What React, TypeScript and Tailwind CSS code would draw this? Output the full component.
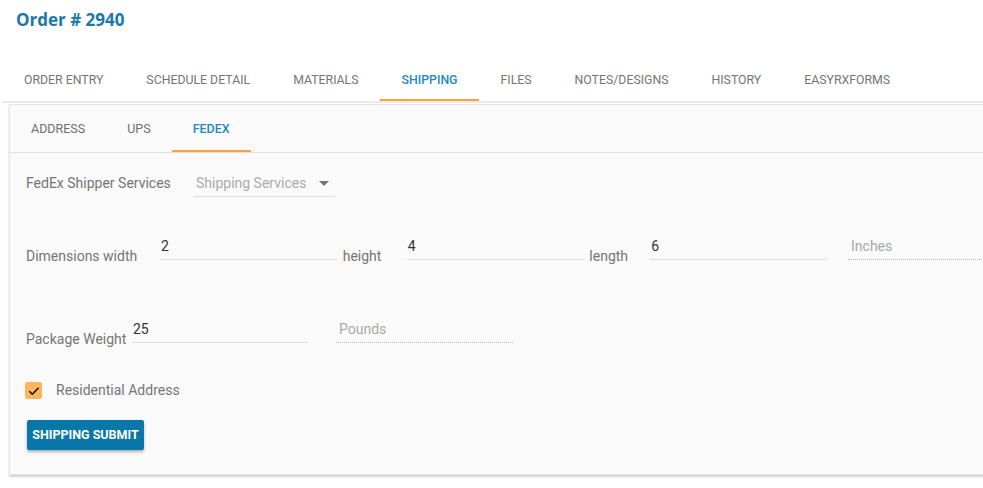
import { useState } from "react";

const mainTabs = ["Order Entry", "Schedule Detail", "Materials", "Shipping", "Files", "Notes/Designs", "History", "EasyRxForms"];
const shipTabs = ["Address", "UPS", "FedEx"];

function TextInput({ value, width }: { value: string; width: string }) {
  return (
    <div className={`${width} h-[28px] border-b border-[#dcdcdc] pl-[1px] pt-[4px] text-[14px] leading-[20px] text-[#333]`}>
      {value}
    </div>
  );
}

function UnitField({ unit, width }: { unit: string; width: string }) {
  return (
    <div className={`${width} h-[28px] border-b border-dotted border-[#b5b5b5] pl-[3px] pt-[4px] text-[14px] leading-[20px] text-[#a8a8a8]`}>
      {unit}
    </div>
  );
}

function Label({ text, width }: { text: string; width: string }) {
  return <div className={`${width} shrink-0 pt-[16px] text-[14px] leading-[16px] text-[#757575]`}>{text}</div>;
}

export default function App() {
  const [residential, setResidential] = useState(true);

  return (
    <div className="h-[488px] w-[983px] overflow-hidden bg-white" style={{ fontFamily: "Roboto, 'Liberation Sans', sans-serif" }}>
      <div className="h-[58px] pl-[16px] pt-[8px]">
        <h1 className="text-[17px] font-bold leading-[24px] text-[#1a78ad]" style={{ fontFamily: "'Open Sans', 'Liberation Sans', sans-serif" }}>
          Order # 2940
        </h1>
      </div>

      <nav className="ml-[2px] flex h-[45px] border-b-2 border-[#ebebeb]">
        {mainTabs.map((tab) => {
          const active = tab === "Shipping";
          return (
            <div
              key={tab}
              className={`-ml-px flex h-[43px] items-center border-b-2 px-[22px] pt-[3px] text-[12.3px] uppercase first:ml-0 ${
                active ? "border-[#f7a23b] font-medium text-[#2489c2]" : "border-transparent text-[#757575]"
              }`}
            >
              {tab}
            </div>
          );
        })}
      </nav>

      <section className="ml-[9px] mt-[1px] w-[990px] border border-[#e4e4e4] bg-[#fafafa] shadow-[0_2px_2px_rgba(0,0,0,0.18)]">
        <div className="flex h-[48px] border-b border-[#e0e0e0]">
          {shipTabs.map((tab) => {
            const active = tab === "FedEx";
            return (
              <div
                key={tab}
                className={`flex h-[47px] items-center border-b-2 px-[21px] pt-[4px] text-[12.5px] uppercase ${
                  active ? "border-[#f7a23b] font-medium text-[#2489c2]" : "border-transparent text-[#6f6f6f]"
                }`}
              >
                {tab}
              </div>
            );
          })}
        </div>

        <div className="pb-[24px] pl-[16px] pt-[17px]">
          <div className="flex h-[27px] items-center">
            <div className="w-[168px] text-[14px] text-[#757575]">FedEx Shipper Services</div>
            <div className="flex h-[27px] w-[141px] items-center justify-between border-b border-[#dcdcdc] pl-[2px] pr-[6px] text-[14px] text-[#ababab]">
              <span>Shipping Services</span>
              <svg width="10" height="5" viewBox="0 0 10 5">
                <path d="M0 0h10L5 5z" fill="#757575" />
              </svg>
            </div>
          </div>

          <div className="mt-[35px] flex h-[36px] items-start">
            <Label text="Dimensions width" width="w-[134px]" />
            <TextInput value="2" width="w-[177px]" />
            <Label text="height" width="ml-[6px] w-[64px]" />
            <TextInput value="4" width="w-[178px]" />
            <Label text="length" width="ml-[5px] w-[61px]" />
            <TextInput value="6" width="w-[177px]" />
            <div className="ml-[21px]">
              <UnitField unit="Inches" width="w-[150px]" />
            </div>
          </div>

          <div className="mt-[47px] flex h-[36px] items-start">
            <Label text="Package Weight" width="w-[106px]" />
            <TextInput value="25" width="w-[176px]" />
            <div className="ml-[28px]">
              <UnitField unit="Pounds" width="w-[177px]" />
            </div>
          </div>

          <label className="mt-[31px] -ml-px flex h-[17px] cursor-pointer items-center">
            <button
              type="button"
              onClick={() => setResidential(!residential)}
              className="flex h-[17px] w-[17px] items-center justify-center rounded-[2px] bg-[#fdb65b]"
            >
              {residential ? (
                <svg width="14" height="14" viewBox="0 0 24 24">
                  <path d="M4 12.5l5 5L20 6.5" fill="none" stroke="#111" strokeWidth="2.8" />
                </svg>
              ) : null}
            </button>
            <span className="ml-[14px] text-[14px] text-[#757575]">Residential Address</span>
          </label>

          <button
            type="button"
            className="mt-[21px] ml-[1px] h-[30px] w-[117px] rounded-[2px] bg-[#0a77aa] text-[12.5px] font-bold uppercase text-white shadow-[0_2px_3px_rgba(0,0,0,0.3)]"
          >
            Shipping Submit
          </button>
        </div>
      </section>
    </div>
  );
}
